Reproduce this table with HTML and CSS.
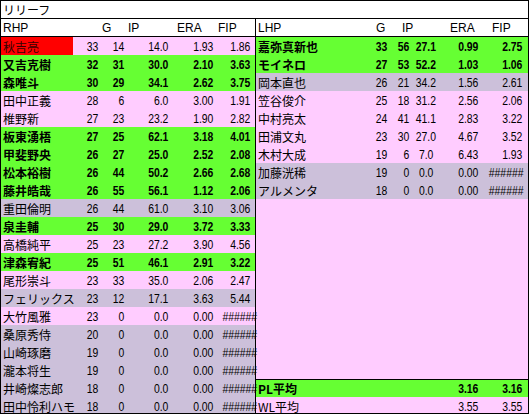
FILE: index.html
```html
<!DOCTYPE html>
<html lang="ja">
<head>
<meta charset="utf-8">
<title>リリーフ</title>
<link rel="stylesheet" href="styles.css">
</head>
<body>
<div class="sheet">
  <div class="title">リリーフ</div>
  <div class="panels">
    <section class="panel left">
      <div class="row head"><span>RHP</span><span></span><span>G</span><span>IP</span><span>ERA</span><span>FIP</span></div>
      <div class="row p"><span class="red">秋吉亮</span><span>33</span><span>14</span><span>14.0</span><span>1.93</span><span>1.86</span></div>
      <div class="row g"><span>又吉克樹</span><span>32</span><span>31</span><span>30.0</span><span>2.10</span><span>3.63</span></div>
      <div class="row g"><span>森唯斗</span><span>30</span><span>29</span><span>34.1</span><span>2.62</span><span>3.75</span></div>
      <div class="row p"><span>田中正義</span><span>28</span><span>6</span><span>6.0</span><span>3.00</span><span>1.91</span></div>
      <div class="row p"><span>椎野新</span><span>27</span><span>23</span><span>23.2</span><span>1.90</span><span>2.82</span></div>
      <div class="row g"><span>板東湧梧</span><span>27</span><span>25</span><span>62.1</span><span>3.18</span><span>4.01</span></div>
      <div class="row g"><span>甲斐野央</span><span>26</span><span>27</span><span>25.0</span><span>2.52</span><span>2.08</span></div>
      <div class="row g"><span>松本裕樹</span><span>26</span><span>44</span><span>50.2</span><span>2.66</span><span>2.68</span></div>
      <div class="row g"><span>藤井皓哉</span><span>26</span><span>55</span><span>56.1</span><span>1.12</span><span>2.06</span></div>
      <div class="row v"><span>重田倫明</span><span>26</span><span>44</span><span>61.0</span><span>3.10</span><span>3.06</span></div>
      <div class="row g"><span>泉圭輔</span><span>25</span><span>30</span><span>29.0</span><span>3.72</span><span>3.33</span></div>
      <div class="row p"><span>高橋純平</span><span>25</span><span>23</span><span>27.2</span><span>3.90</span><span>4.56</span></div>
      <div class="row g"><span>津森宥紀</span><span>25</span><span>51</span><span>46.1</span><span>2.91</span><span>3.22</span></div>
      <div class="row p"><span>尾形崇斗</span><span>23</span><span>33</span><span>35.0</span><span>2.06</span><span>2.47</span></div>
      <div class="row v"><span>フェリックス</span><span>23</span><span>12</span><span>17.1</span><span>3.63</span><span>5.44</span></div>
      <div class="row p"><span>大竹風雅</span><span>23</span><span>0</span><span>0.0</span><span>0.00</span><span>######</span></div>
      <div class="row v"><span>桑原秀侍</span><span>20</span><span>0</span><span>0.0</span><span>0.00</span><span>######</span></div>
      <div class="row v"><span>山崎琢磨</span><span>19</span><span>0</span><span>0.0</span><span>0.00</span><span>######</span></div>
      <div class="row v"><span>瀧本将生</span><span>19</span><span>0</span><span>0.0</span><span>0.00</span><span>######</span></div>
      <div class="row v"><span>井崎燦志郎</span><span>18</span><span>0</span><span>0.0</span><span>0.00</span><span>######</span></div>
      <div class="row v"><span>田中怜利ハモ</span><span>18</span><span>0</span><span>0.0</span><span>0.00</span><span>######</span></div>
    </section>
    <section class="panel right">
      <div class="row head"><span>LHP</span><span>G</span><span>IP</span><span></span><span>ERA</span><span>FIP</span></div>
      <div class="row g"><span>嘉弥真新也</span><span>33</span><span>56</span><span>27.1</span><span>0.99</span><span>2.75</span></div>
      <div class="row g"><span>モイネロ</span><span>27</span><span>53</span><span>52.2</span><span>1.03</span><span>1.06</span></div>
      <div class="row v"><span>岡本直也</span><span>26</span><span>21</span><span>34.2</span><span>1.56</span><span>2.61</span></div>
      <div class="row p"><span>笠谷俊介</span><span>25</span><span>18</span><span>31.2</span><span>2.56</span><span>2.06</span></div>
      <div class="row p"><span>中村亮太</span><span>24</span><span>41</span><span>41.1</span><span>2.83</span><span>3.22</span></div>
      <div class="row p"><span>田浦文丸</span><span>23</span><span>30</span><span>27.0</span><span>4.67</span><span>3.52</span></div>
      <div class="row p"><span>木村大成</span><span>19</span><span>6</span><span>7.0</span><span>6.43</span><span>1.93</span></div>
      <div class="row v"><span>加藤洸稀</span><span>19</span><span>0</span><span>0.0</span><span>0.00</span><span>######</span></div>
      <div class="row v"><span>アルメンタ</span><span>18</span><span>0</span><span>0.0</span><span>0.00</span><span>######</span></div>
      <div class="filler"></div>
      <div class="row g avg"><span>PL平均</span><span></span><span></span><span></span><span>3.16</span><span>3.16</span></div>
      <div class="row p"><span>WL平均</span><span></span><span></span><span></span><span>3.55</span><span>3.55</span></div>
    </section>
  </div>
</div>
</body>
</html>
```
FILE: styles.css
```css
* {
  box-sizing: border-box;
  margin: 0;
  padding: 0;
}

body {
  margin: 0;
  background: #ffffff;
  color: #000000;
  font-family: "Noto Sans CJK JP", sans-serif;
}

.sheet {
  width: 529px;
  height: 414px;
  border: 1px solid #000000;
  overflow: hidden;
  background: #ffffff;
}

.title {
  height: 18px;
  border-bottom: 1px solid #000000;
  font-size: 12px;
  line-height: 18px;
  padding-left: 2px;
}

.panels {
  display: flex;
}

.panel {
  display: flex;
  flex-direction: column;
  height: 396px;
}

.left {
  width: 254px;
  --cols: 72px 27px 26px 44px 45px 37px 3px;
}

.right {
  width: 273px;
  border-left: 1px solid #000000;
  background: #ffccff;
  --cols: 103px 30px 22px 24px 45px 44px 4px;
}

.row {
  display: grid;
  grid-template-columns: var(--cols);
  height: 18px;
  flex-shrink: 0;
  font-size: 12px;
  line-height: 19px;
  white-space: nowrap;
}

.row span:first-child {
  padding-left: 2px;
}

.row span + span {
  font-family: "Liberation Sans", sans-serif;
  font-size: 13px;
  text-align: right;
  padding-right: 2px;
  transform: scaleX(0.8);
  transform-origin: right center;
}

.row.head {
  background: #ffffff;
  border-bottom: 1px solid #000000;
  line-height: 18px;
}

.row.head span {
  font-family: "Liberation Sans", sans-serif;
  font-size: 12px;
  text-align: left;
  padding-right: 0;
  transform: none;
}

.left .head span:nth-child(3) { padding-left: 2px; }
.left .head span:nth-child(4) { padding-left: 2px; }
.left .head span:nth-child(5) { padding-left: 7px; }
.left .head span:nth-child(6) { padding-left: 3px; }

.right .head span:nth-child(2) { padding-left: 17px; }
.right .head span:nth-child(3) { padding-left: 13px; }
.right .head span:nth-child(5) { padding-left: 15px; }
.right .head span:nth-child(6) { padding-left: 12px; }

.p { background: #ffccff; }
.g { background: #66ff33; font-weight: 700; }
.v { background: #ccc0da; }

.red {
  background: #ff0000;
  color: #3a0000;
}

.filler {
  flex: 1;
  background: #ffccff;
}

.avg {
  height: 18px;
  border-top: 1px solid #000000;
  line-height: 18px;
}
```
